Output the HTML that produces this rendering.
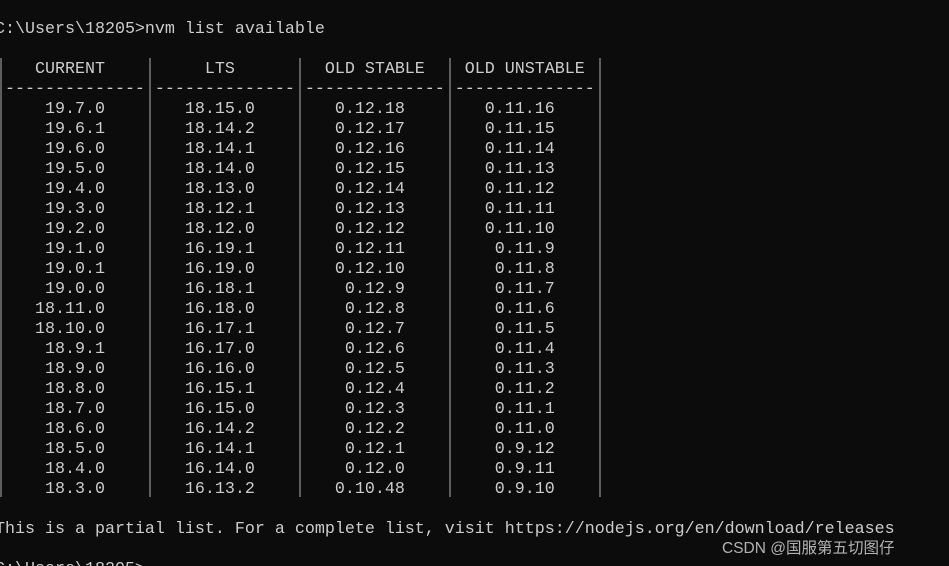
<!DOCTYPE html>
<html><head><meta charset="utf-8"><style>
html,body{margin:0;padding:0;background:#0c0c0c;width:949px;height:566px;overflow:hidden;position:relative}
pre{position:absolute;left:-5px;top:20px;margin:0;font-family:"Liberation Mono",monospace;font-size:16.67px;line-height:20px;color:#cccccc;white-space:pre}
.bar{position:absolute;top:58px;height:439px;width:2px;background:#5e5e5e}
.wm{position:absolute;left:722px;top:536px;font-family:"Liberation Sans","Noto Sans CJK SC",sans-serif;font-size:15.5px;color:rgba(220,220,220,0.8);white-space:nowrap}
</style></head><body>
<div class="bar" style="left:0px"></div>
<div class="bar" style="left:149px"></div>
<div class="bar" style="left:299px"></div>
<div class="bar" style="left:449px"></div>
<div class="bar" style="left:599px"></div>
<pre>C:\Users\18205&gt;nvm list available

    CURRENT          LTS         OLD STABLE    OLD UNSTABLE 
 -------------- -------------- -------------- --------------
     19.7.0        18.15.0        0.12.18        0.11.16    
     19.6.1        18.14.2        0.12.17        0.11.15    
     19.6.0        18.14.1        0.12.16        0.11.14    
     19.5.0        18.14.0        0.12.15        0.11.13    
     19.4.0        18.13.0        0.12.14        0.11.12    
     19.3.0        18.12.1        0.12.13        0.11.11    
     19.2.0        18.12.0        0.12.12        0.11.10    
     19.1.0        16.19.1        0.12.11         0.11.9    
     19.0.1        16.19.0        0.12.10         0.11.8    
     19.0.0        16.18.1         0.12.9         0.11.7    
    18.11.0        16.18.0         0.12.8         0.11.6    
    18.10.0        16.17.1         0.12.7         0.11.5    
     18.9.1        16.17.0         0.12.6         0.11.4    
     18.9.0        16.16.0         0.12.5         0.11.3    
     18.8.0        16.15.1         0.12.4         0.11.2    
     18.7.0        16.15.0         0.12.3         0.11.1    
     18.6.0        16.14.2         0.12.2         0.11.0    
     18.5.0        16.14.1         0.12.1         0.9.12    
     18.4.0        16.14.0         0.12.0         0.9.11    
     18.3.0        16.13.2        0.10.48         0.9.10    

This is a partial list. For a complete list, visit https://nodejs.org/en/download/releases

C:\Users\18205&gt;</pre>
<div class="wm">CSDN @国服第五切图仔</div>
</body></html>
